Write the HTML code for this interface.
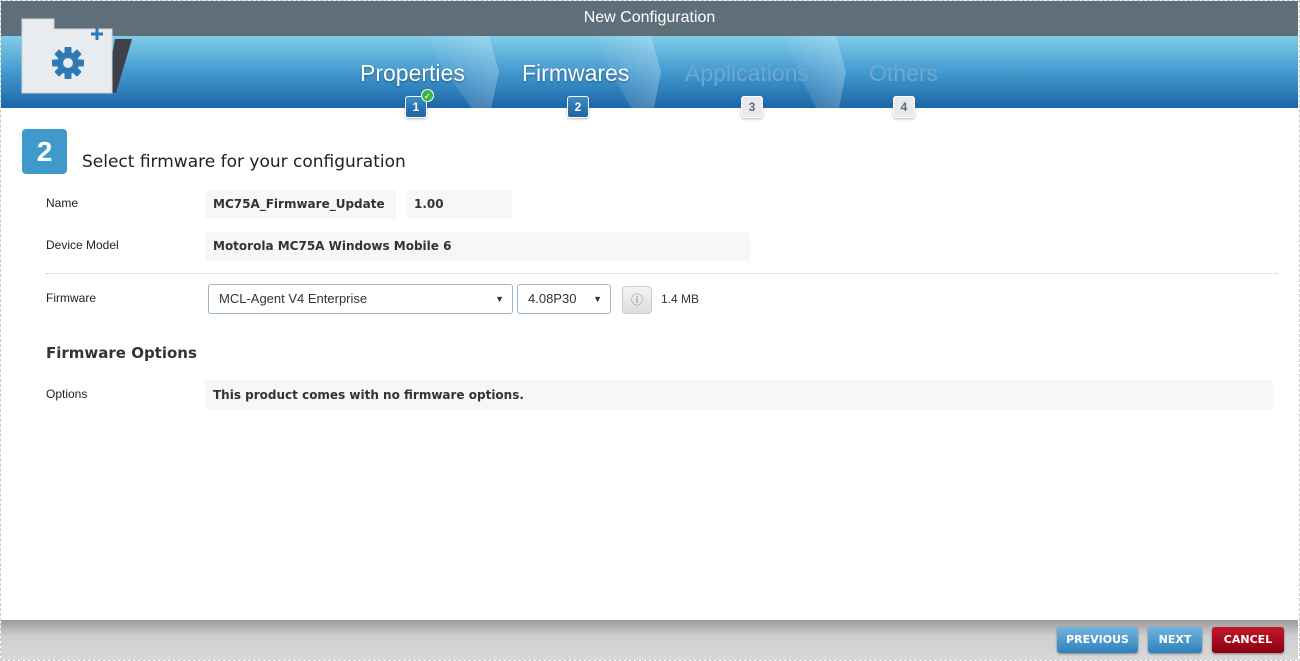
<!DOCTYPE html>
<html><head><meta charset="utf-8"><style>
*{margin:0;padding:0;box-sizing:border-box}
body{width:1300px;height:661px;overflow:hidden;background:#fff;font-family:"Liberation Sans",Verdana,sans-serif;position:relative}
.frame{position:absolute;left:0;top:0;width:1300px;height:661px;border:1px dashed #ccc;pointer-events:none}
.top{position:absolute;left:1px;top:1px;width:1297px;height:35px;background:#5f6f79;color:#fff;font-size:16px;text-align:center;line-height:34px}
.band{position:absolute;left:1px;top:36px;width:1297px;height:72px;background:linear-gradient(#80cbe8,#3e95cc 55%,#1c66a6)}
.step{position:absolute;top:60px;font-size:23px;color:#fff;text-shadow:0 1px 2px rgba(0,0,0,.4)}
.dim{color:#6fa7cf;text-shadow:none}
.num{position:absolute;top:96px;width:22px;height:22px;border-radius:3px;font-size:12px;font-weight:bold;text-align:center;line-height:20px;border:1px solid #fff;box-shadow:0 1px 2px rgba(0,0,0,.3)}
.nb{background:linear-gradient(#3b8dc6,#1f639d);color:#fff}
.ng{background:#e6eaee;color:#667}
.lbl{position:absolute;left:46px;font-size:12px;color:#222}
.box{position:absolute;background:#f7f7f7;border-radius:3px;font-weight:bold;color:#333;padding-left:8px;font-family:"DejaVu Sans",Verdana,sans-serif;font-size:12px}
.sel{position:absolute;top:284px;height:30px;border:1px solid #9bb6c8;border-radius:3px;font-size:13px;color:#333;line-height:28px;padding-left:10px}
.sel span{position:absolute;right:8px;font-size:9px}
.btn{position:absolute;top:627px;height:26px;border-radius:3px;color:#fff;font-size:11px;font-weight:bold;text-align:center;line-height:26px;font-family:"DejaVu Sans",Verdana,sans-serif;box-shadow:0 1px 2px rgba(0,0,0,.4)}
</style></head><body>
<div class="top">New Configuration</div>
<div class="band">
<svg width="1297" height="72" style="position:absolute;left:0;top:0">
<defs><linearGradient id="g" x1="0" x2="1"><stop offset="0" stop-color="#fff" stop-opacity="0"/><stop offset="1" stop-color="#fff" stop-opacity=".25"/></linearGradient></defs>
<path d="M420 0 L488 0 L498 36 L490 72 L470 72 Z" fill="url(#g)"/>
<path d="M590 0 L650 0 L660 36 L653 72 L630 72 Z" fill="url(#g)"/>
<path d="M780 0 L835 0 L845 36 L838 72 L815 72 Z" fill="url(#g)"/>
</svg>
</div>
<svg style="position:absolute;left:20px;top:17px" width="115" height="80">
<path d="M95 22 L112 22 L96 76 L85 76 Z" fill="#3c4248"/>
<path d="M2 2 L34 2 L34 12 L92 12 L92 76 L2 76 Z" fill="#e9ecee" stroke="#d0d5d8"/>
<g transform="translate(48,46)" fill="#2f7ab5"><circle r="11"/>
<g><rect x="-3.5" y="-16" width="7" height="32" rx="1"/><rect x="-3.5" y="-16" width="7" height="32" rx="1" transform="rotate(45)"/><rect x="-3.5" y="-16" width="7" height="32" rx="1" transform="rotate(90)"/><rect x="-3.5" y="-16" width="7" height="32" rx="1" transform="rotate(135)"/></g>
<circle r="5" fill="#e9ecee"/></g>
<path d="M71 17 h12 M77 11 v12" stroke="#2f7ab5" stroke-width="3"/>
</svg>
<div class="step" style="left:360px">Properties</div>
<div class="step" style="left:522px">Firmwares</div>
<div class="step dim" style="left:685px">Applications</div>
<div class="step dim" style="left:869px">Others</div>
<div class="num nb" style="left:405px">1</div>
<div style="position:absolute;left:421px;top:89px;width:13px;height:13px;border-radius:50%;background:#3bb34a;color:#fff;font-size:9px;text-align:center;line-height:13px;border:1px solid #fff">✓</div>
<div class="num nb" style="left:567px">2</div>
<div class="num ng" style="left:741px">3</div>
<div class="num ng" style="left:893px">4</div>
<div style="position:absolute;left:22px;top:129px;width:45px;height:45px;border-radius:4px;background:#3f9acb;color:#fff;font-size:28px;font-weight:bold;text-align:center;line-height:45px">2</div>
<div style="position:absolute;left:82px;top:152px;font-size:17px;color:#222;font-family:'DejaVu Sans',sans-serif">Select firmware for your configuration</div>
<div class="lbl" style="top:196px">Name</div>
<div class="box" style="left:205px;top:190px;width:191px;height:29px;line-height:29px">MC75A_Firmware_Update</div>
<div class="box" style="left:406px;top:190px;width:106px;height:29px;line-height:29px">1.00</div>
<div class="lbl" style="top:238px">Device Model</div>
<div class="box" style="left:205px;top:232px;width:545px;height:29px;line-height:29px">Motorola MC75A Windows Mobile 6</div>
<div style="position:absolute;left:46px;top:273px;width:1232px;border-top:1px dotted #ccc"></div>
<div class="lbl" style="top:291px">Firmware</div>
<div class="sel" style="left:208px;width:305px">MCL-Agent V4 Enterprise<span>▼</span></div>
<div class="sel" style="left:517px;width:94px">4.08P30<span>▼</span></div>
<div style="position:absolute;left:622px;top:286px;width:30px;height:28px;border-radius:4px;background:linear-gradient(#f4f4f4,#ddd);border:1px solid #ccc;text-align:center;line-height:26px;font-size:12px;color:#777">ⓘ</div>
<div style="position:absolute;left:661px;top:292px;font-size:12px;color:#333">1.4 MB</div>
<div style="position:absolute;left:46px;top:344px;font-size:15px;font-weight:bold;color:#333;font-family:'DejaVu Sans',sans-serif">Firmware Options</div>
<div class="lbl" style="top:387px">Options</div>
<div class="box" style="left:205px;top:380px;width:1068px;height:30px;line-height:30px">This product comes with no firmware options.</div>
<div style="position:absolute;left:1px;top:620px;width:1297px;height:40px;background:linear-gradient(#9a9a9a,#cfcfcf 40%,#d8d8d8)"></div>
<div class="btn" style="left:1057px;width:81px;background:linear-gradient(#6fb5e0,#2f80bd)">PREVIOUS</div>
<div class="btn" style="left:1148px;width:54px;background:linear-gradient(#6fb5e0,#2f80bd)">NEXT</div>
<div class="btn" style="left:1212px;width:72px;background:linear-gradient(#c4182a,#8a0010)">CANCEL</div>
<div class="frame"></div>
</body></html>
